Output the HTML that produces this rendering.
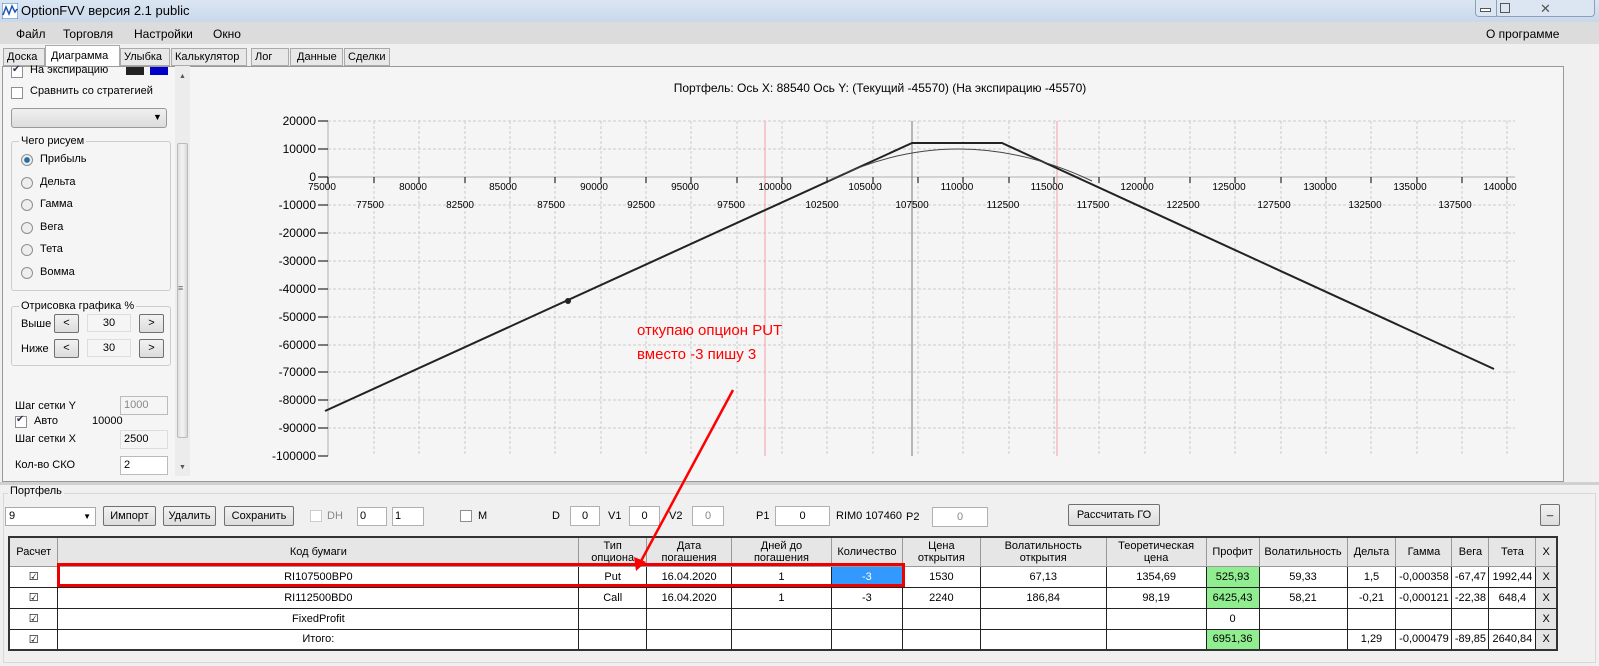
<!DOCTYPE html>
<html><head><meta charset="utf-8"><style>
*{box-sizing:border-box;margin:0;padding:0}
body{width:1599px;height:666px;overflow:hidden;background:#f0f0f0;font-family:"Liberation Sans",sans-serif;font-size:12px;color:#000;position:relative}
.a{position:absolute}
.title{left:0;top:0;width:1599px;height:22px;background:linear-gradient(#dbe6f3,#c9d8ea)}
.menu{left:0;top:22px;width:1599px;height:22px;background:#dcdcdc}
.btn{position:absolute;border:1px solid #707070;border-radius:2px;background:linear-gradient(#f2f2f2,#dcdcdc);text-align:center;font-size:11px}
.tb{position:absolute;border:1px solid #b0b0b0;background:#fff;text-align:center;font-size:11px}
.cb{position:absolute;width:12px;height:12px;border:1px solid #8f8f8f;background:#fff}
.rd{position:absolute;width:12px;height:12px;border:1px solid #8f8f8f;border-radius:50%;background:#eee}
.tab{position:absolute;top:48px;height:18px;border:1px solid #aaa;background:#e8e8e8;padding:2px 3px;font-size:11px}
.lp{font-size:11px}
table{border-collapse:collapse;font-size:11px}
td{border:1px solid #222;text-align:center;height:21px;padding:0}
th{border:1px solid #999;font-weight:normal;background:#e6e6e6;height:29px;line-height:12px}
</style></head><body>
<div class="a title"></div>
<svg class="a" style="left:2px;top:3px" width="16" height="16"><rect x="0" y="0" width="16" height="16" fill="#fff" stroke="#2a6ebb"/><path d="M1 12 L4 4 L7 11 L10 3 L13 9 L15 6" stroke="#1d56b3" fill="none" stroke-width="1.5"/></svg>
<div class="a" style="left:21px;top:3px;font-size:13px">OptionFVV версия 2.1 public</div>
<div class="a" style="left:1495px;top:0;width:100px;height:17px;border:1px solid #8ea0b8;border-top:none;border-radius:0 0 4px 4px;background:#dce6f2"></div>
<div class="a" style="left:1475px;top:0;width:22px;height:17px;border:1px solid #8ea0b8;border-top:none;border-radius:0 0 0 4px;background:#dce6f2"></div>
<div class="a" style="left:1480px;top:8px;width:11px;height:4px;border:1px solid #555;background:#fff"></div>
<div class="a" style="left:1500px;top:3px;width:10px;height:10px;border:1px solid #555"></div>
<div class="a" style="left:1540px;top:1px;font-size:13px;color:#555">✕</div>
<div class="a menu"></div>
<div class="a" style="left:16px;top:27px">Файл</div>
<div class="a" style="left:63px;top:27px">Торговля</div>
<div class="a" style="left:134px;top:27px">Настройки</div>
<div class="a" style="left:213px;top:27px">Окно</div>
<div class="a" style="left:1486px;top:27px">О программе</div>
<div class="tab" style="left:3px;width:42px">Доска</div>
<div class="a" style="left:45px;top:45px;width:75px;height:22px;border:1px solid #aaa;border-bottom:none;background:#fff;padding:4px 5px;font-size:11px">Диаграмма</div>
<div class="tab" style="left:120px;width:50px">Улыбка</div>
<div class="tab" style="left:171px;width:76px">Калькулятор</div>
<div class="tab" style="left:251px;width:38px">Лог</div>
<div class="tab" style="left:290px;width:53px;padding-left:6px">Данные</div>
<div class="tab" style="left:344px;width:46px">Сделки</div>
<div class="a" style="left:2px;top:66px;width:1562px;height:416px;background:#f5f5f5;border:1px solid #999"></div>
<div class="lp">
<div class="cb" style="left:11px;top:66px"></div><div class="a" style="left:12px;top:64px;font-size:10px;color:#335">✔</div>
<div class="a" style="left:30px;top:64px">На экспирацию</div>
<div class="a" style="left:126px;top:67px;width:18px;height:8px;background:#222"></div>
<div class="a" style="left:150px;top:67px;width:18px;height:8px;background:#0000c8"></div>
<div class="cb" style="left:11px;top:87px"></div><div class="a" style="left:30px;top:85px">Сравнить со стратегией</div>
<div class="a" style="left:11px;top:108px;width:156px;height:20px;border:1px solid #999;border-radius:3px;background:linear-gradient(#f0f0f0,#dcdcdc)"></div>
<div class="a" style="left:153px;top:112px;font-size:9px">▼</div>
<div class="a" style="left:11px;top:141px;width:160px;height:150px;border:1px solid #ccc;border-radius:3px"></div>
<div class="a" style="left:19px;top:135px;background:#f5f5f5;padding:0 2px">Чего рисуем</div>
<div class="rd" style="left:21px;top:154px;background:radial-gradient(#1e6fb0 35%,#eee 45%)"></div><div class="a" style="left:40px;top:153px">Прибыль</div>
<div class="rd" style="left:21px;top:177px"></div><div class="a" style="left:40px;top:176px">Дельта</div>
<div class="rd" style="left:21px;top:199px"></div><div class="a" style="left:40px;top:198px">Гамма</div>
<div class="rd" style="left:21px;top:222px"></div><div class="a" style="left:40px;top:221px">Вега</div>
<div class="rd" style="left:21px;top:244px"></div><div class="a" style="left:40px;top:243px">Тета</div>
<div class="rd" style="left:21px;top:267px"></div><div class="a" style="left:40px;top:266px">Вомма</div>
<div class="a" style="left:11px;top:306px;width:160px;height:60px;border:1px solid #ccc;border-radius:3px"></div>
<div class="a" style="left:19px;top:300px;background:#f5f5f5;padding:0 2px">Отрисовка графика %</div>
<div class="a" style="left:21px;top:318px">Выше</div>
<div class="btn" style="left:54px;top:314px;width:25px;height:19px;padding-top:2px">&lt;</div>
<div class="a" style="left:87px;top:314px;width:44px;height:18px;border:1px solid #ddd;text-align:center;padding-top:2px">30</div>
<div class="btn" style="left:139px;top:314px;width:25px;height:19px;padding-top:2px">&gt;</div>
<div class="a" style="left:21px;top:343px">Ниже</div>
<div class="btn" style="left:54px;top:339px;width:25px;height:19px;padding-top:2px">&lt;</div>
<div class="a" style="left:87px;top:339px;width:44px;height:18px;border:1px solid #ddd;text-align:center;padding-top:2px">30</div>
<div class="btn" style="left:139px;top:339px;width:25px;height:19px;padding-top:2px">&gt;</div>
<div class="a" style="left:15px;top:400px">Шаг сетки Y</div>
<div class="a" style="left:120px;top:396px;width:48px;height:19px;border:1px solid #bbb;color:#888;padding:2px 3px">1000</div>
<div class="cb" style="left:15px;top:416px"></div><div class="a" style="left:16px;top:414px;font-size:10px;color:#335">✔</div>
<div class="a" style="left:34px;top:415px">Авто</div><div class="a" style="left:92px;top:415px">10000</div>
<div class="a" style="left:15px;top:433px">Шаг сетки X</div>
<div class="a" style="left:120px;top:430px;width:48px;height:19px;border:1px solid #ddd;padding:2px 3px">2500</div>
<div class="a" style="left:15px;top:459px">Кол-во СКО</div>
<div class="a" style="left:120px;top:456px;width:48px;height:19px;border:1px solid #bbb;background:#fff;padding:2px 3px">2</div>
</div>
<div class="a" style="left:175px;top:66px;width:15px;height:410px;background:#ececec"></div>
<div class="a" style="left:177px;top:143px;width:11px;height:295px;background:linear-gradient(90deg,#e0e0e0,#f4f4f4,#d8d8d8);border:1px solid #bbb;border-radius:2px"></div>
<div class="a" style="left:179px;top:73px;font-size:7px;color:#555">▲</div>
<div class="a" style="left:179px;top:464px;font-size:7px;color:#555">▼</div>
<div class="a" style="left:178px;top:283px;font-size:9px;color:#666">≡</div>
<svg class="a" style="left:0;top:0" width="1599" height="482">
<text x="880" y="92" font-size="12" text-anchor="middle" font-family="Liberation Sans">Портфель: Ось X: 88540 Ось Y:  (Текущий -45570)  (На экспирацию -45570)</text>
<g stroke="#ccc" stroke-dasharray="3,2" stroke-width="1">
<path d="M328 121H1515M328 149H1515M328 205H1515M328 233H1515M328 261H1515M328 289H1515M328 317H1515M328 345H1515M328 372H1515M328 400H1515M328 428H1515"/>
<path d="M374 121V456M419 121V456M465 121V456M510 121V456M555 121V456M601 121V456M646 121V456M691 121V456M737 121V456M782 121V456M827 121V456M873 121V456M918 121V456M963 121V456M1009 121V456M1054 121V456M1099 121V456M1145 121V456M1190 121V456M1235 121V456M1281 121V456M1326 121V456M1371 121V456M1417 121V456M1462 121V456M1507 121V456"/>
</g>
<path d="M328 121V456M328 177H1515" stroke="#d2d2d2" stroke-width="2"/>
<path d="M765 121V456M1057 121V456" stroke="#f3a0a8"/>
<path d="M912 121V456" stroke="#777"/>
<g stroke="#000"><path d="M318 121h10M318 149h10M318 177h10M318 205h10M318 233h10M318 261h10M318 289h10M318 317h10M318 345h10M318 372h10M318 400h10M318 428h10M318 456h10"/>
<path d="M328 177v6M374 177v6M419 177v6M465 177v6M510 177v6M555 177v6M601 177v6M646 177v6M691 177v6M737 177v6M782 177v6M827 177v6M873 177v6M918 177v6M963 177v6M1009 177v6M1054 177v6M1099 177v6M1145 177v6M1190 177v6M1235 177v6M1281 177v6M1326 177v6M1371 177v6M1417 177v6M1462 177v6M1507 177v6"/></g>
<g font-size="12" text-anchor="end" font-family="Liberation Sans">
<text x="316" y="125">20000</text><text x="316" y="153">10000</text><text x="316" y="181">0</text><text x="316" y="209">-10000</text><text x="316" y="237">-20000</text><text x="316" y="265">-30000</text><text x="316" y="293">-40000</text><text x="316" y="321">-50000</text><text x="316" y="349">-60000</text><text x="316" y="376">-70000</text><text x="316" y="404">-80000</text><text x="316" y="432">-90000</text><text x="316" y="460">-100000</text></g>
<g font-size="10" text-anchor="middle" font-family="Liberation Sans">
<text x="322" y="190">75000</text><text x="413" y="190">80000</text><text x="503" y="190">85000</text><text x="594" y="190">90000</text><text x="685" y="190">95000</text><text x="775" y="190">100000</text><text x="865" y="190">105000</text><text x="957" y="190">110000</text><text x="1047" y="190">115000</text><text x="1137" y="190">120000</text><text x="1229" y="190">125000</text><text x="1320" y="190">130000</text><text x="1410" y="190">135000</text><text x="1500" y="190">140000</text>
<text x="370" y="208">77500</text><text x="460" y="208">82500</text><text x="551" y="208">87500</text><text x="641" y="208">92500</text><text x="731" y="208">97500</text><text x="822" y="208">102500</text><text x="912" y="208">107500</text><text x="1003" y="208">112500</text><text x="1093" y="208">117500</text><text x="1183" y="208">122500</text><text x="1274" y="208">127500</text><text x="1365" y="208">132500</text><text x="1455" y="208">137500</text></g>
<path d="M325 411L912 143H1002L1494 369" stroke="#222" stroke-width="2" fill="none"/>
<path d="M828 181Q957 117 1092 181" stroke="#444" stroke-width="1" fill="none"/>
<circle cx="568" cy="301" r="3" fill="#222"/>
<text x="637" y="335" font-size="15" fill="#f00" font-family="Liberation Sans">откупаю опцион PUT</text>
<text x="637" y="359" font-size="15" fill="#f00" font-family="Liberation Sans">вместо -3 пишу 3</text>
</svg>
<div class="a" style="left:0;top:482px;width:1599px;height:3px;background:#d0d0d0"></div>
<div class="a" style="left:3px;top:493px;width:1593px;height:170px;border:1px solid #d8d8d8"></div>
<div class="a" style="left:8px;top:485px;background:#f0f0f0;padding:0 2px;font-size:11px">Портфель</div>
<div class="a" style="left:5px;top:507px;width:91px;height:19px;background:#fff;border:1px solid #aaa;padding:2px 3px;font-size:11px">9<span style="position:absolute;right:4px;font-size:8px;top:4px">▼</span></div>
<div class="btn" style="left:103px;top:506px;width:53px;height:20px;padding-top:3px">Импорт</div>
<div class="btn" style="left:163px;top:506px;width:53px;height:20px;padding-top:3px">Удалить</div>
<div class="btn" style="left:224px;top:506px;width:70px;height:20px;padding-top:3px">Сохранить</div>
<div class="cb" style="left:310px;top:510px;border-color:#ccc"></div><div class="a" style="left:327px;top:510px;color:#888;font-size:11px">DH</div>
<div class="tb" style="left:357px;top:507px;width:30px;height:19px;text-align:left;padding:2px">0</div>
<div class="tb" style="left:392px;top:507px;width:32px;height:19px;text-align:left;padding:2px">1</div>
<div class="cb" style="left:460px;top:510px"></div><div class="a" style="left:478px;top:510px;font-size:11px">M</div>
<div class="a" style="left:552px;top:510px;font-size:11px">D</div><div class="tb" style="left:570px;top:506px;width:30px;height:20px;padding-top:3px">0</div>
<div class="a" style="left:608px;top:510px;font-size:11px">V1</div><div class="tb" style="left:629px;top:506px;width:31px;height:20px;padding-top:3px">0</div>
<div class="a" style="left:669px;top:510px;font-size:11px">V2</div><div class="tb" style="left:692px;top:506px;width:32px;height:20px;padding-top:3px;color:#888">0</div>
<div class="a" style="left:756px;top:510px;font-size:11px">P1</div><div class="tb" style="left:775px;top:506px;width:55px;height:20px;padding-top:3px">0</div>
<div class="a" style="left:836px;top:510px;font-size:11px">RIM0 107460</div>
<div class="a" style="left:906px;top:511px;font-size:11px">P2</div><div class="tb" style="left:932px;top:507px;width:56px;height:20px;padding-top:3px;color:#888">0</div>
<div class="btn" style="left:1068px;top:504px;width:92px;height:22px;padding-top:4px">Рассчитать ГО</div>
<div class="btn" style="left:1540px;top:504px;width:20px;height:22px">_</div>
<table class="a" style="left:8px;top:536px;width:1550px;background:#fff;border:2px solid #333">
<colgroup><col style="width:49px"><col style="width:522px"><col style="width:68px"><col style="width:85px"><col style="width:100px"><col style="width:71px"><col style="width:78px"><col style="width:126px"><col style="width:100px"><col style="width:53px"><col style="width:88px"><col style="width:49px"><col style="width:56px"><col style="width:37px"><col style="width:47px"><col style="width:21px"></colgroup>
<tr><th>Расчет</th><th>Код бумаги</th><th>Тип<br>опциона</th><th>Дата<br>погашения</th><th>Дней до<br>погашения</th><th>Количество</th><th>Цена<br>открытия</th><th>Волатильность<br>открытия</th><th>Теоретическая<br>цена</th><th>Профит</th><th>Волатильность</th><th>Дельта</th><th>Гамма</th><th>Вега</th><th>Тета</th><th>X</th></tr>
<tr><td>☑</td><td>RI107500BP0</td><td>Put</td><td>16.04.2020</td><td>1</td><td style="background:#3399ff;color:#fff">-3</td><td>1530</td><td>67,13</td><td>1354,69</td><td style="background:#90ee90">525,93</td><td>59,33</td><td>1,5</td><td>-0,000358</td><td>-67,47</td><td>1992,44</td><td style="background:#e4e4e4">X</td></tr>
<tr><td>☑</td><td>RI112500BD0</td><td>Call</td><td>16.04.2020</td><td>1</td><td>-3</td><td>2240</td><td>186,84</td><td>98,19</td><td style="background:#90ee90">6425,43</td><td>58,21</td><td>-0,21</td><td>-0,000121</td><td>-22,38</td><td>648,4</td><td style="background:#e4e4e4">X</td></tr>
<tr><td>☑</td><td>FixedProfit</td><td></td><td></td><td></td><td></td><td></td><td></td><td></td><td>0</td><td></td><td></td><td></td><td></td><td></td><td style="background:#e4e4e4">X</td></tr>
<tr><td>☑</td><td>Итого:</td><td></td><td></td><td></td><td></td><td></td><td></td><td></td><td style="background:#90ee90">6951,36</td><td></td><td>1,29</td><td>-0,000479</td><td>-89,85</td><td>2640,84</td><td style="background:#e4e4e4">X</td></tr>
</table>
<div class="a" style="left:57px;top:563px;width:848px;height:24px;border:3px solid #e00"></div>
<svg class="a" style="left:0;top:0" width="1599" height="666"><path d="M733 390L640 563" stroke="#f00" stroke-width="2.5"/><path d="M636 571L634 557L646 562Z" fill="#f00"/></svg>
</body></html>
